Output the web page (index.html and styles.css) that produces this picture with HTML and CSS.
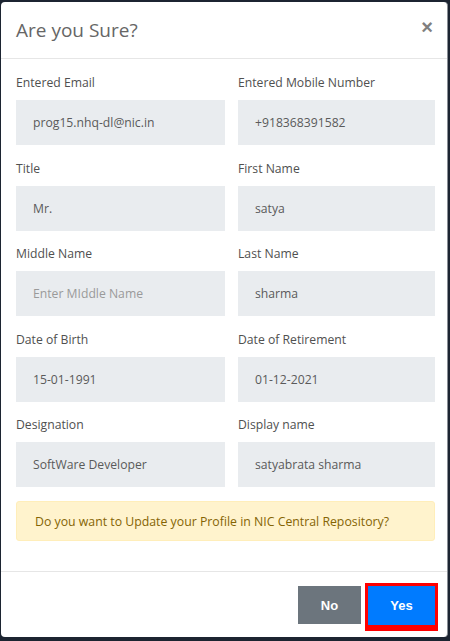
FILE: index.html
```html
<!DOCTYPE html>
<html>
<head>
<meta charset="utf-8">
<link rel="stylesheet" href="styles.css">
</head>
<body>
<div class="modal">
  <div class="modal-header">
    <h4 class="modal-title">Are you Sure?</h4>
    <span class="close">&times;</span>
  </div>
  <div class="modal-body">
    <div class="grid">
      <div class="field"><label>Entered Email</label><div class="input">prog15.nhq-dl@nic.in</div></div>
      <div class="field"><label>Entered Mobile Number</label><div class="input">+918368391582</div></div>
      <div class="field"><label>Title</label><div class="input">Mr.</div></div>
      <div class="field"><label>First Name</label><div class="input">satya</div></div>
      <div class="field"><label>Middle Name</label><div class="input placeholder">Enter MIddle Name</div></div>
      <div class="field"><label>Last Name</label><div class="input">sharma</div></div>
      <div class="field"><label>Date of Birth</label><div class="input">15-01-1991</div></div>
      <div class="field"><label>Date of Retirement</label><div class="input">01-12-2021</div></div>
      <div class="field"><label>Designation</label><div class="input">SoftWare Developer</div></div>
      <div class="field"><label>Display name</label><div class="input">satyabrata sharma</div></div>
    </div>
    <div class="alert">Do you want to Update your Profile in NIC Central Repository?</div>
  </div>
  <div class="modal-footer">
    <button class="btn btn-no">No</button>
    <button class="btn btn-yes">Yes</button>
  </div>
</div>
</body>
</html>
```
FILE: styles.css
```css
html, body {
  margin: 0;
  padding: 0;
  background: #1c2431;
}
body {
  font-family: "Open Sans", "Noto Sans", sans-serif;
  width: 450px;
  height: 641px;
  overflow: hidden;
}
.modal {
  margin: 2px 0 0 1px;
  width: 446px;
  height: 635px;
  background: #fff;
  border-right: 1px solid #8a8f96;
  border-radius: 4px;
  display: flex;
  flex-direction: column;
}
.modal-header {
  height: 56px;
  border-bottom: 1px solid #e6e6e6;
  display: flex;
  align-items: center;
  justify-content: space-between;
  padding: 0 16px 0 15px;
}
.modal-title {
  margin: 0;
  font-size: 19px;
  font-weight: 400;
  color: #666;
}
.close {
  font-family: "Liberation Sans", Arial, sans-serif;
  font-size: 20px;
  font-weight: 700;
  color: #808080;
  line-height: 1;
  margin-top: -6px;
  margin-right: -2px;
}
.modal-body {
  padding: 14px 12px 30px 15px;
}
.grid {
  display: grid;
  grid-template-columns: 209px 197px;
  column-gap: 13px;
  row-gap: 13.5px;
}
.field label {
  display: block;
  font-size: 12.2px;
  line-height: 20px;
  color: #505050;
  margin-bottom: 7px;
}
.input {
  height: 45px;
  background: #e9ecef;
  box-sizing: border-box;
  padding: 0 17px;
  display: flex;
  align-items: center;
  font-size: 12.2px;
  color: #5a5a5a;
}
.input.placeholder {
  color: #9a9a9a;
}
.alert {
  margin-top: 14px;
  height: 40px;
  box-sizing: border-box;
  background: #fff3cd;
  border: 1px solid #ffeeba;
  border-radius: 3px;
  color: #856404;
  font-size: 12.3px;
  display: flex;
  align-items: center;
  padding-left: 18px;
}
.modal-footer {
  border-top: 1px solid #e6e6e6;
  display: flex;
  justify-content: flex-end;
  gap: 7px;
  padding: 14px 12px 0 0;
}
.btn {
  border: none;
  color: #fff;
  font-family: "Liberation Sans", Arial, sans-serif;
  font-weight: 700;
  font-size: 13px;
  padding: 0;
}
.btn-no {
  background: #6c757d;
  width: 63px;
  height: 38px;
}
.btn-yes {
  background: #007bff;
  width: 67px;
  height: 39px;
  box-shadow: 0 0 0 3px #ff0000, 0 3px 0 3px #ff0000;
}
```
